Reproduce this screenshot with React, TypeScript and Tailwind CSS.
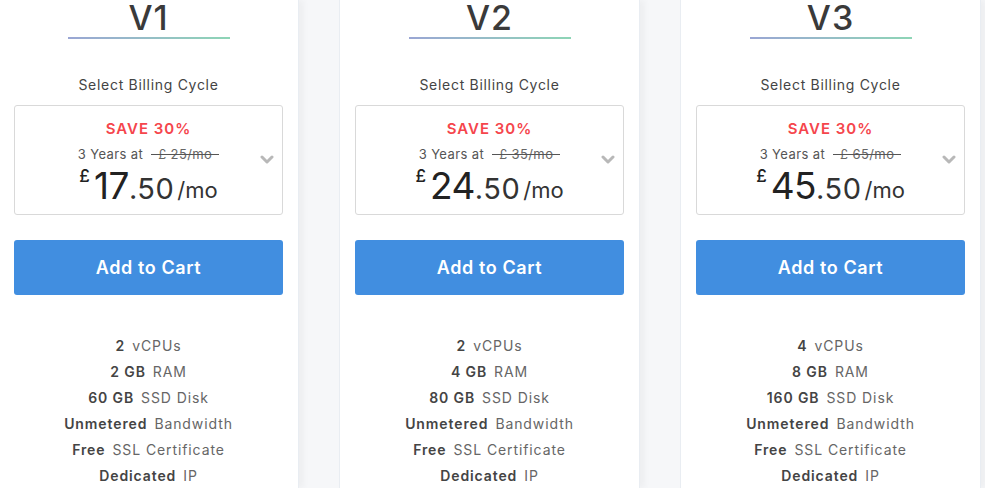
const plans = [
  { name: 'V1', old: '25', whole: '17', cpu: '2', ram: '2 GB', disk: '60 GB' },
  { name: 'V2', old: '35', whole: '24', cpu: '2', ram: '4 GB', disk: '80 GB' },
  { name: 'V3', old: '65', whole: '45', cpu: '4', ram: '8 GB', disk: '160 GB' },
]

function Chevron() {
  return (
    <svg width="14" height="10" viewBox="0 0 14 10" className="absolute right-[8px] top-[49px]">
      <polyline points="2,2 7,7 12,2" fill="none" stroke="#b8b8b8" strokeWidth="3" strokeLinecap="round" strokeLinejoin="round" />
    </svg>
  )
}

function Feature({ b, t }: { b: string; t: string }) {
  return (
    <div className="h-[26px] shrink-0 leading-[26px] text-[14px] flex">
      <span className="font-semibold text-[#444]">{b}</span>
      <span className="ml-[7px] text-[#666]">{t}</span>
    </div>
  )
}

function Card({ p }: { p: (typeof plans)[number] }) {
  return (
    <div className="w-[301px] shrink-0 bg-white border-x border-[#e9edf2] shadow-[5px_0_6px_rgba(0,0,0,0.035)] px-[15px] flex flex-col items-center">
      <div className="shrink-0 h-[36px] leading-[36px] text-[34px] font-medium text-[#3a3a3a] tracking-[1px]">{p.name}</div>
      <div className="shrink-0 mt-[1px] w-[162px] h-[2px] bg-gradient-to-r from-[#9aa6d4] to-[#8ed5b6]" />
      <div className="shrink-0 mt-[36px] text-[14px] leading-[20px] text-[#444] tracking-[0.7px]">Select Billing Cycle</div>
      <div className="relative shrink-0 mt-[10px] w-full h-[110px] border border-[#d9d9d9] rounded-[3px] flex flex-col items-center">
        <div className="mt-[13px] text-[15px] leading-[20px] font-semibold text-[#f5454c] tracking-[1px]">SAVE 30%</div>
        <div className="mt-[6px] text-[13px] leading-[18px] text-[#555] flex items-center tracking-[0.4px]">
          <span>3 Years at</span>
          <span className="relative ml-[8px] px-[7px] text-[#666]">
            £ {p.old}/mo
            <span className="absolute left-0 right-0 top-[9px] h-px bg-[#555]" />
          </span>
        </div>
        <div className="mt-[3px] flex items-start text-[#222] leading-none">
          <span className="text-[17px] mt-[2px] mr-[4px] font-medium">£</span>
          <span className="text-[37px] mt-[1px] tracking-[-0.5px]">{p.whole}</span>
          <span className="text-[29px] mt-[8px] text-[#333] tracking-[0.5px]">.50</span>
          <span className="text-[22px] mt-[13px] ml-[3px] text-[#333]">/mo</span>
        </div>
        <Chevron />
      </div>
      <button className="shrink-0 mt-[25px] w-full h-[55px] rounded-[3px] bg-[#418ee0] text-white text-[18px] font-semibold tracking-[0.6px]">
        Add to Cart
      </button>
      <div className="shrink-0 mt-[38px] flex flex-col items-center tracking-[0.9px]">
        <Feature b={p.cpu} t="vCPUs" />
        <Feature b={p.ram} t="RAM" />
        <Feature b={p.disk} t="SSD Disk" />
        <Feature b="Unmetered" t="Bandwidth" />
        <Feature b="Free" t="SSL Certificate" />
        <Feature b="Dedicated" t="IP" />
      </div>
    </div>
  )
}

export default function App() {
  return (
    <div className="w-[985px] h-[488px] overflow-hidden bg-[#f6f7f9] font-['Inter',sans-serif]">
      <div className="flex gap-[40px] ml-[-2px] h-full">
        {plans.map((p) => (
          <Card key={p.name} p={p} />
        ))}
      </div>
    </div>
  )
}
